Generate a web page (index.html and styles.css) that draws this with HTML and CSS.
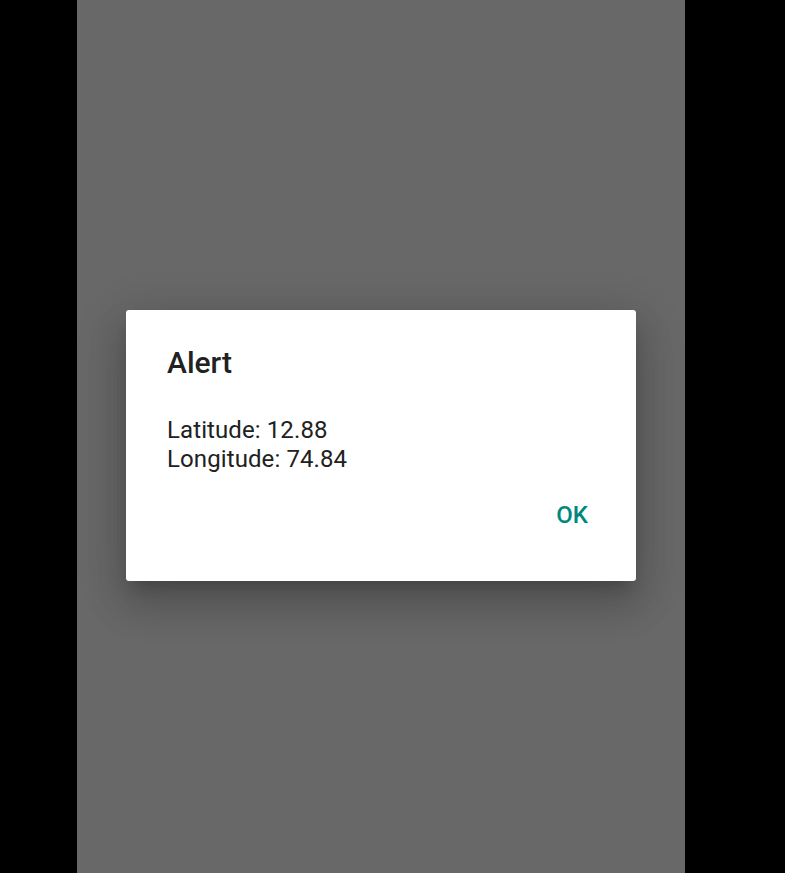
FILE: index.html
```html
<!DOCTYPE html>
<html>
<head>
<meta charset="utf-8">
<link rel="stylesheet" href="styles.css">
</head>
<body>
<div class="screen">
  <div class="dialog">
    <div class="title">Alert</div>
    <div class="message">
      <div>Latitude: 12.88</div>
      <div>Longitude: 74.84</div>
    </div>
    <div class="actions">
      <button class="btn">OK</button>
    </div>
  </div>
</div>
</body>
</html>
```
FILE: styles.css
```css
html, body {
  margin: 0;
  padding: 0;
  background: #000;
  height: 100%;
  overflow: hidden;
}
.screen {
  margin-left: 77px;
  width: 608px;
  height: 873px;
  background: #686868;
  display: flex;
  flex-direction: column;
  align-items: center;
  padding-top: 310px;
  box-sizing: border-box;
}
.dialog {
  width: 510px;
  height: 271px;
  box-sizing: border-box;
  background: #fff;
  border-radius: 3px;
  box-shadow: 0 11px 15px -7px rgba(0,0,0,.2), 0 24px 38px 3px rgba(0,0,0,.14), 0 9px 46px 8px rgba(0,0,0,.12);
  padding: 35px 48px 0 41px;
  font-family: Roboto, "Noto Sans", sans-serif;
  display: flex;
  flex-direction: column;
}
.title {
  font-size: 30px;
  font-weight: 500;
  color: #212121;
  line-height: 36px;
}
.message {
  margin-top: 35px;
  font-size: 24px;
  line-height: 29px;
  letter-spacing: 0.1px;
  color: #212121;
}
.actions {
  display: flex;
  justify-content: flex-end;
  margin-top: 26px;
}
.btn {
  font-family: Roboto, "Noto Sans", sans-serif;
  font-size: 24px;
  font-weight: 500;
  color: #00897b;
  background: none;
  border: none;
  padding: 0;
  line-height: 30px;
  cursor: pointer;
}
```
